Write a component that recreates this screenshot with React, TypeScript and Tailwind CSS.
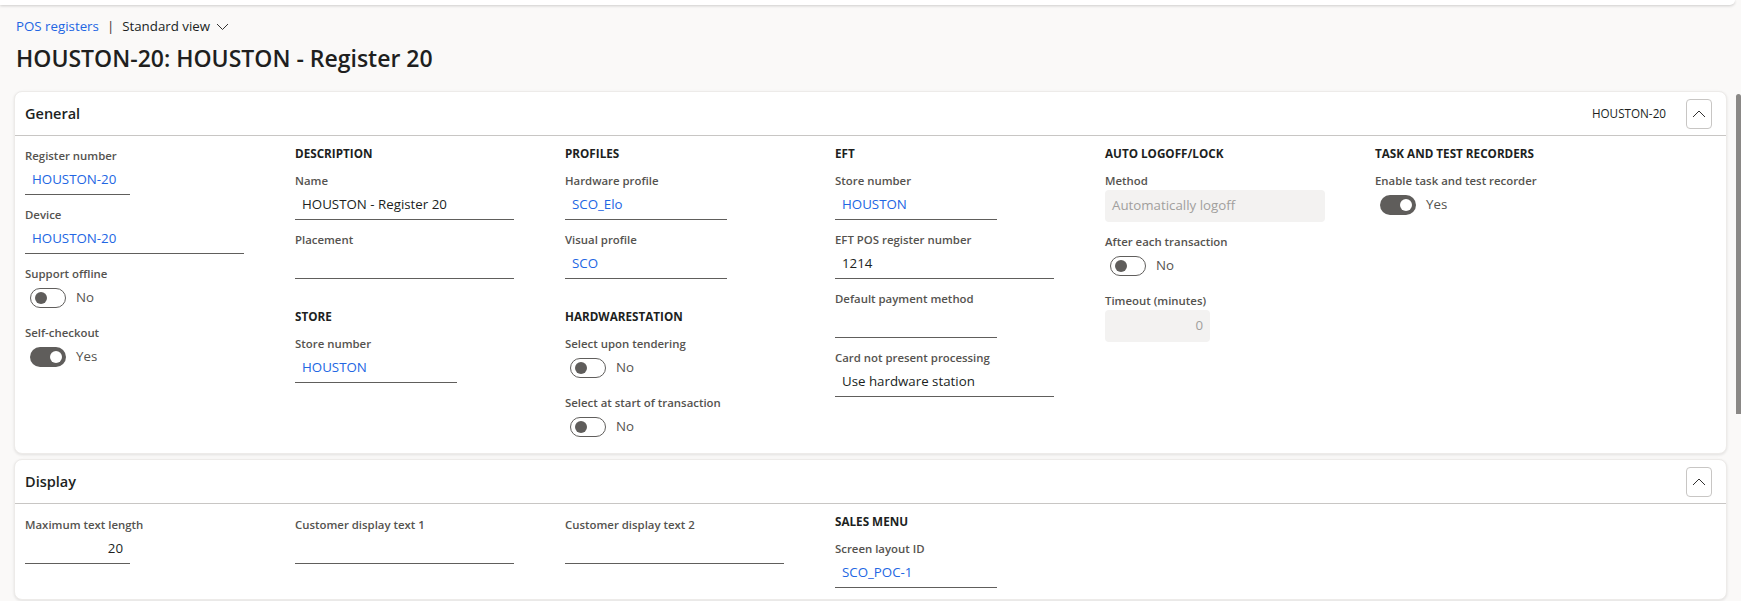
import React from "react";

const FONT = { fontFamily: '"Segoe UI", "Open Sans", "Noto Sans", sans-serif' };

function Label({ children }: { children: React.ReactNode }) {
  return <div className="h-[18px] text-[11.4px] leading-[18px] font-semibold text-[#55534f] whitespace-nowrap">{children}</div>;
}

function Heading({ children, first }: { children: React.ReactNode; first?: boolean }) {
  return (
    <div className={`h-[18px] text-[11.7px] leading-[18px] font-bold text-[#201f1e] mb-[10px] whitespace-nowrap ${first ? "" : "mt-[17px]"}`}>{children}</div>
  );
}

type W = "s" | "m" | "l";
const widthCls: Record<W, string> = { s: "w-[105px]", m: "w-[162px]", l: "w-[219px]" };

function Field({ label, value, link, w = "l", right }: { label: string; value?: string; link?: boolean; w?: W; right?: boolean }) {
  return (
    <div className="mb-[11px] flex flex-col">
      <Label>{label}</Label>
      <div
        className={`${widthCls[w]} h-[30px] border-b border-[#605e5c] px-[7px] flex items-center text-[13.3px] whitespace-nowrap ${right ? "justify-end" : ""} ${link ? "text-[#2266e3]" : "text-[#201f1e]"}`}
      >
        {value}
      </div>
    </div>
  );
}

function Toggle({ on }: { on?: boolean }) {
  return on ? (
    <div className="w-[36px] h-[20px] rounded-full bg-[#5f5d5b] flex items-center justify-end pr-[4px]">
      <div className="w-[12px] h-[12px] rounded-full bg-white" />
    </div>
  ) : (
    <div className="w-[36px] h-[20px] rounded-full border border-[#605e5c] bg-white flex items-center pl-[4px]">
      <div className="w-[12px] h-[12px] rounded-full bg-[#5f5d5b]" />
    </div>
  );
}

function ToggleField({ label, on }: { label: string; on?: boolean }) {
  return (
    <div className="mb-[11px] flex flex-col">
      <Label>{label}</Label>
      <div className="h-[30px] flex items-center pl-[5px] gap-[10px]">
        <Toggle on={on} />
        <span className="text-[13.3px] text-[#55534f]">{on ? "Yes" : "No"}</span>
      </div>
    </div>
  );
}

function ReadOnlyField({ label, value, w = "l", right }: { label: string; value: string; w?: W; right?: boolean }) {
  return (
    <div className="mb-[11px] flex flex-col">
      <Label>{label}</Label>
      <div
        className={`${w === "s" ? "w-[105px]" : "w-[220px]"} h-[32px] rounded-[4px] bg-[#f3f2f1] px-[7px] flex items-center text-[13.3px] text-[#a19f9d] ${right ? "justify-end" : ""}`}
      >
        {value}
      </div>
    </div>
  );
}

function ChevronUp() {
  return (
    <svg width="14" height="8" viewBox="0 0 14 8" fill="none">
      <polyline points="1,7 7,1 13,7" stroke="#323130" strokeWidth="1" />
    </svg>
  );
}

function CardHeader({ title, right }: { title: string; right?: string }) {
  return (
    <div className="h-[44px] border-b border-[#c8c6c4] flex items-center pl-[10px] pr-[14px]">
      <div className="text-[14.5px] font-semibold text-[#201f1e] flex-1">{title}</div>
      {right && <div className="text-[11.7px] text-[#201f1e] mr-[20px]">{right}</div>}
      <div className="w-[26px] h-[30px] border border-[#c8c6c4] rounded-[4px] flex items-center justify-center">
        <ChevronUp />
      </div>
    </div>
  );
}

const GRID = "grid grid-cols-[270px_270px_270px_270px_270px_1fr] pl-[10px] pt-[8px]";
const COL = "flex flex-col items-start";

export default function App() {
  return (
    <div className="w-[1741px] h-[601px] bg-[#faf9f8] overflow-hidden" style={FONT}>
      <div className="h-[5px] mr-[6px] bg-white rounded-br-[6px] shadow-[0_1px_3px_rgba(0,0,0,0.18)]" />
      <div className="flex">
        <div className="flex-1 pl-[14px] pr-[9px]">
          <div className="pt-[12px] pl-[2px] h-[32px] flex items-center text-[13.3px]">
            <span className="text-[#2266e3]">POS registers</span>
            <span className="mx-[8px] text-[#323130]">|</span>
            <span className="text-[#201f1e]">Standard view</span>
            <svg className="ml-[6px]" width="13" height="8" viewBox="0 0 13 8" fill="none">
              <polyline points="1,1 6.5,6.5 12,1" stroke="#323130" strokeWidth="1" />
            </svg>
          </div>
          <div className="mt-[5px] pl-[2px] h-[32px] leading-[32px] text-[23px] font-semibold text-[#201f1e]">
            HOUSTON-20: HOUSTON - Register 20
          </div>

          <div className="mt-[17px] bg-white rounded-[8px] border border-[#edebe9] shadow-[0_1px_3px_rgba(0,0,0,0.10)]">
            <CardHeader title="General" right="HOUSTON-20" />
            <div className={GRID}>
              <div className={`${COL} pt-[3px]`}>
                <Field label="Register number" value="HOUSTON-20" link w="s" />
                <Field label="Device" value="HOUSTON-20" link w="l" />
                <ToggleField label="Support offline" />
                <ToggleField label="Self-checkout" on />
              </div>
              <div className={COL}>
                <Heading first>DESCRIPTION</Heading>
                <Field label="Name" value="HOUSTON - Register 20" />
                <Field label="Placement" />
                <Heading>STORE</Heading>
                <Field label="Store number" value="HOUSTON" link w="m" />
              </div>
              <div className={COL}>
                <Heading first>PROFILES</Heading>
                <Field label="Hardware profile" value="SCO_Elo" link w="m" />
                <Field label="Visual profile" value="SCO" link w="m" />
                <Heading>HARDWARESTATION</Heading>
                <ToggleField label="Select upon tendering" />
                <ToggleField label="Select at start of transaction" />
              </div>
              <div className={COL}>
                <Heading first>EFT</Heading>
                <Field label="Store number" value="HOUSTON" link w="m" />
                <Field label="EFT POS register number" value="1214" />
                <Field label="Default payment method" w="m" />
                <Field label="Card not present processing" value="Use hardware station" />
              </div>
              <div className={COL}>
                <Heading first>AUTO LOGOFF/LOCK</Heading>
                <ReadOnlyField label="Method" value="Automatically logoff" />
                <ToggleField label="After each transaction" />
                <ReadOnlyField label="Timeout (minutes)" value="0" w="s" right />
              </div>
              <div className={COL}>
                <Heading first>TASK AND TEST RECORDERS</Heading>
                <ToggleField label="Enable task and test recorder" on />
              </div>
            </div>
          </div>

          <div className="mt-[5px] bg-white rounded-[8px] border border-[#edebe9] shadow-[0_1px_3px_rgba(0,0,0,0.10)]">
            <CardHeader title="Display" />
            <div className={GRID}>
              <div className={`${COL} pt-[4px]`}>
                <Field label="Maximum text length" value="20" w="s" right />
              </div>
              <div className={`${COL} pt-[4px]`}>
                <Field label="Customer display text 1" />
              </div>
              <div className={`${COL} pt-[4px]`}>
                <Field label="Customer display text 2" />
              </div>
              <div className={COL}>
                <Heading first>SALES MENU</Heading>
                <Field label="Screen layout ID" value="SCO_POC-1" link w="m" />
              </div>
              <div />
              <div />
            </div>
          </div>
        </div>
        <div className="w-[5px]">
          <div className="mt-[89px] h-[320px] bg-[#8a8886] rounded-t-[3px]" />
        </div>
      </div>
    </div>
  );
}
